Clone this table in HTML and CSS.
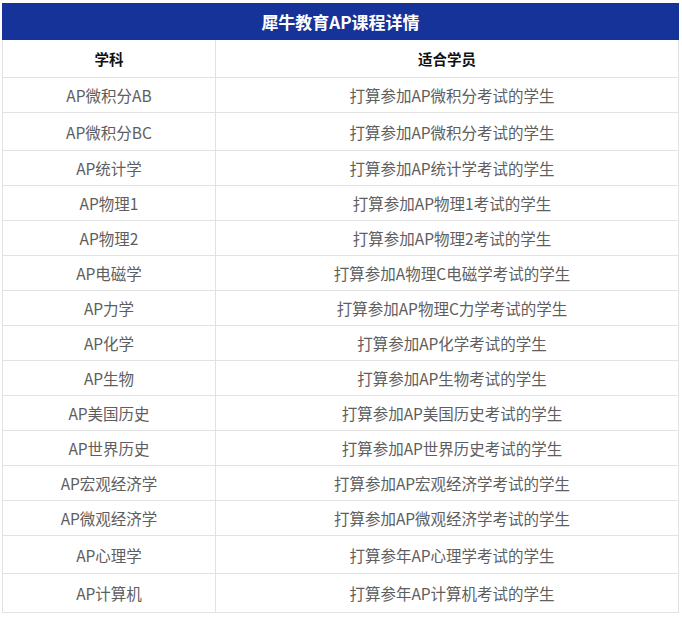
FILE: index.html
```html
<!DOCTYPE html>
<html lang="zh">
<head>
<meta charset="utf-8">
<title>犀牛教育AP课程详情</title>
<link rel="stylesheet" href="styles.css">
</head>
<body>
<div class="wrap">
<table class="course">
  <colgroup><col class="c1"><col class="c2"></colgroup>
  <thead>
    <tr><th colspan="2" class="title">犀牛教育AP课程详情</th></tr>
    <tr class="head"><th>学科</th><th>适合学员</th></tr>
  </thead>
  <tbody>
    <tr><td>AP微积分AB</td><td>打算参加AP微积分考试的学生</td></tr>
    <tr class="tall"><td>AP微积分BC</td><td>打算参加AP微积分考试的学生</td></tr>
    <tr><td>AP统计学</td><td>打算参加AP统计学考试的学生</td></tr>
    <tr><td>AP物理1</td><td>打算参加AP物理1考试的学生</td></tr>
    <tr><td>AP物理2</td><td>打算参加AP物理2考试的学生</td></tr>
    <tr><td>AP电磁学</td><td>打算参加A物理C电磁学考试的学生</td></tr>
    <tr><td>AP力学</td><td>打算参加AP物理C力学考试的学生</td></tr>
    <tr><td>AP化学</td><td>打算参加AP化学考试的学生</td></tr>
    <tr><td>AP生物</td><td>打算参加AP生物考试的学生</td></tr>
    <tr><td>AP美国历史</td><td>打算参加AP美国历史考试的学生</td></tr>
    <tr><td>AP世界历史</td><td>打算参加AP世界历史考试的学生</td></tr>
    <tr><td>AP宏观经济学</td><td>打算参加AP宏观经济学考试的学生</td></tr>
    <tr><td>AP微观经济学</td><td>打算参加AP微观经济学考试的学生</td></tr>
    <tr class="tall"><td>AP心理学</td><td>打算参年AP心理学考试的学生</td></tr>
    <tr class="tall"><td>AP计算机</td><td>打算参年AP计算机考试的学生</td></tr>
  </tbody>
</table>
</div>
</body>
</html>
```

FILE: styles.css
```css
html, body {
  margin: 0;
  padding: 0;
  background: #ffffff;
}
.wrap {
  padding: 3px 0 0 2px;
}
.course {
  border-collapse: collapse;
  width: 676px;
  table-layout: fixed;
  font-family: "Noto Sans CJK SC", "Noto Sans", sans-serif;
  font-size: 15.5px;
  color: #5e5e5e;
}
.course .c1 {
  width: 213px;
}
.course .c2 {
  width: 463px;
}
.course th,
.course td {
  border: 1px solid #e2e2e2;
  text-align: center;
  padding: 0;
  height: 34px;
  line-height: 20px;
}
.course td + td {
  padding-left: 10px;
}
.course .title {
  background: #16339a;
  color: #ffffff;
  font-size: 17px;
  font-weight: bold;
  height: 35px;
  border-color: #16339a;
}
.course .head th {
  color: #111111;
  font-weight: bold;
  font-size: 14.5px;
  height: 37px;
}
.course tr.tall td {
  height: 37px;
}
.course tr:last-child td {
  height: 38px;
}
```
